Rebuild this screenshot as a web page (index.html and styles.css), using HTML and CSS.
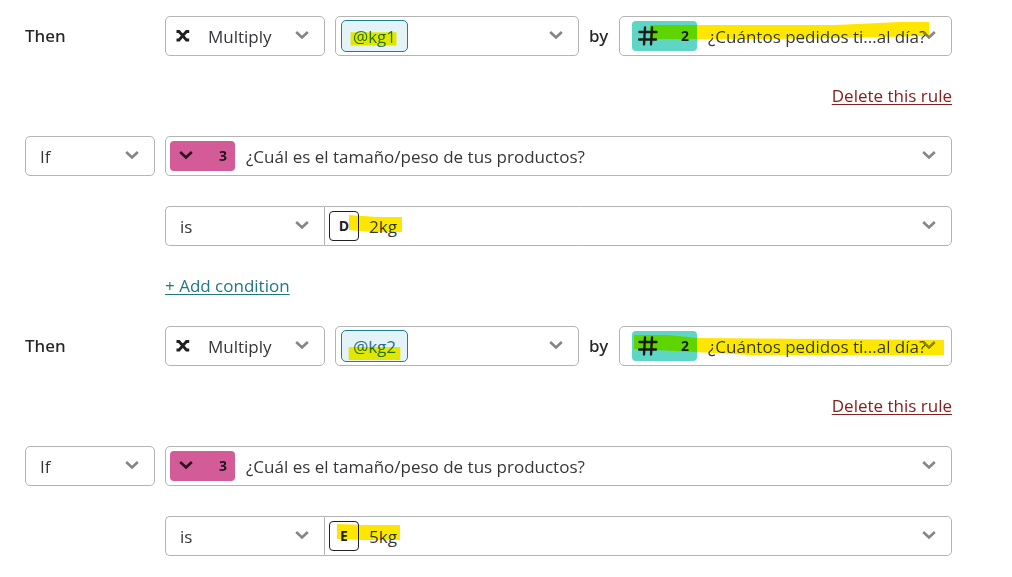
FILE: index.html
```html
<!DOCTYPE html>
<html lang="es">
<head>
<meta charset="utf-8">
<title>Logic rules</title>
<meta name="viewport" content="width=device-width, initial-scale=1">
<link rel="stylesheet" href="styles.css">
</head>
<body>
<svg class="defs" aria-hidden="true">
  <symbol id="chevron" viewBox="0 0 14 14"><path d="M1.2 3 7 8.4 12.8 3" fill="none" stroke="currentColor" stroke-width="2.6"/></symbol>
  <symbol id="times" viewBox="0 0 14 14"><path d="M.5 2.500H3L10.500 11h2.700M13.200 2.500H10.500L3 11H.5" fill="none" stroke="currentColor" stroke-width="2.800"/></symbol>
  <symbol id="hash" viewBox="0 0 20 20"><path d="M7 1.500 6 18.500M14 1.500 13 18.500M1.500 6h17M1 13.500h17" fill="none" stroke="currentColor" stroke-width="2.400" stroke-linecap="round"/></symbol>
</svg>
<main class="rules">
  <section class="row">
    <span class="word">Then</span>
    <div class="action">
      <div class="field operator">
        <svg class="times"><use href="#times"/></svg>
        <select aria-label="Operation"><option>Multiply</option></select>
        <svg class="chevron"><use href="#chevron"/></svg>
      </div>
      <button class="field variable" type="button" aria-haspopup="listbox">
        <span class="pill">@kg1
          <svg class="marker" viewBox="0 0 67 32"><path d="M8 12H57V26H8z"/></svg>
        </span>
        <svg class="chevron"><use href="#chevron"/></svg>
      </button>
      <span class="word">by</span>
      <div class="field operand">
        <span class="tag number"><svg class="hash"><use href="#hash"/></svg><b>2</b></span>
        <select aria-label="Value"><option>¿Cuántos pedidos ti...al día?</option></select>
        <svg class="chevron"><use href="#chevron"/></svg>
        <svg class="marker" viewBox="0 0 331 38" preserveAspectRatio="none"><path d="M30 8H215L280 5H309V19L220 21 150 22H30z"/></svg>
      </div>
    </div>
  </section>
  <a class="delete" href="#delete">Delete this rule</a>
  <section class="row">
    <div class="field">
      <select aria-label="Clause"><option>If</option></select>
      <svg class="chevron"><use href="#chevron"/></svg>
    </div>
    <div class="conditions">
      <div class="field question">
        <span class="tag choice"><svg class="chevron"><use href="#chevron"/></svg><b>3</b></span>
        <select aria-label="Question"><option>¿Cuál es el tamaño/peso de tus productos?</option></select>
        <svg class="chevron"><use href="#chevron"/></svg>
      </div>
      <div class="pair">
        <div class="field comparison">
          <select aria-label="Comparison"><option>is</option></select>
          <svg class="chevron"><use href="#chevron"/></svg>
        </div>
        <div class="field answer">
          <kbd class="key">D</kbd>
          <select aria-label="Answer"><option>2kg</option></select>
          <svg class="chevron"><use href="#chevron"/></svg>
          <svg class="marker" viewBox="0 0 626 38" preserveAspectRatio="xMinYMid"><path d="M24 8 52 10H77V25H46L24 23z"/></svg>
        </div>
      </div>
    </div>
  </section>
  <a class="add" href="#add">+ Add condition</a>
  <section class="row">
    <span class="word">Then</span>
    <div class="action">
      <div class="field operator">
        <svg class="times"><use href="#times"/></svg>
        <select aria-label="Operation"><option>Multiply</option></select>
        <svg class="chevron"><use href="#chevron"/></svg>
      </div>
      <button class="field variable" type="button" aria-haspopup="listbox">
        <span class="pill">@kg2
          <svg class="marker" viewBox="0 0 67 32"><path d="M6 17H61V31H6z"/></svg>
        </span>
        <svg class="chevron"><use href="#chevron"/></svg>
      </button>
      <span class="word">by</span>
      <div class="field operand">
        <span class="tag number"><svg class="hash"><use href="#hash"/></svg><b>2</b></span>
        <select aria-label="Value"><option>¿Cuántos pedidos ti...al día?</option></select>
        <svg class="chevron"><use href="#chevron"/></svg>
        <svg class="marker" viewBox="0 0 331 38" preserveAspectRatio="none"><path d="M14 8H48L78 11 324 13V28H130L75 25 14 22z"/></svg>
      </div>
    </div>
  </section>
  <a class="delete" href="#delete">Delete this rule</a>
  <section class="row">
    <div class="field">
      <select aria-label="Clause"><option>If</option></select>
      <svg class="chevron"><use href="#chevron"/></svg>
    </div>
    <div class="conditions">
      <div class="field question">
        <span class="tag choice"><svg class="chevron"><use href="#chevron"/></svg><b>3</b></span>
        <select aria-label="Question"><option>¿Cuál es el tamaño/peso de tus productos?</option></select>
        <svg class="chevron"><use href="#chevron"/></svg>
      </div>
      <div class="pair">
        <div class="field comparison">
          <select aria-label="Comparison"><option>is</option></select>
          <svg class="chevron"><use href="#chevron"/></svg>
        </div>
        <div class="field answer">
          <kbd class="key">E</kbd>
          <select aria-label="Answer"><option>5kg</option></select>
          <svg class="chevron"><use href="#chevron"/></svg>
          <svg class="marker" viewBox="0 0 626 38" preserveAspectRatio="xMinYMid"><path d="M12 7 40 8H75V23H36L12 22z"/></svg>
        </div>
      </div>
    </div>
  </section>
</main>
</body>
</html>
```
FILE: styles.css
```css
* { box-sizing: border-box; }

body {
  margin: 0;
  background: #fff;
  color: #35363a;
  font: 17px/24px "Open Sans", "Noto Sans", sans-serif;
}

.defs { position: absolute; width: 0; height: 0; }

.rules {
  display: flex;
  flex-direction: column;
  gap: 28px;
  padding: 16px 60px 20px 25px;
}

.row {
  display: grid;
  grid-template-columns: 130px minmax(0, 1fr);
  gap: 10px;
}

.row > .word { align-self: center; }
.word { font-family: "Noto Sans", sans-serif; font-weight: 500; color: #262627; }

.action {
  display: grid;
  grid-template-columns: 160px minmax(0, 244fr) 20px minmax(0, 333fr);
  gap: 10px;
  align-items: center;
}

.conditions { display: flex; flex-direction: column; gap: 30px; }
.pair { display: grid; grid-template-columns: 159px minmax(0, 1fr); }

.field {
  position: relative;
  display: flex;
  align-items: center;
  width: 100%;
  height: 40px;
  padding: 0 15px 0 14px;
  border: 1px solid #b4b4b4;
  border-radius: 5px;
  background: #fff;
  color: inherit;
  font: inherit;
}

.field select {
  flex: 1;
  min-width: 0;
  height: 38px;
  padding: 2px 0 0;
  border: 0;
  background: transparent;
  color: inherit;
  font: inherit;
  appearance: none;
}

.chevron { flex: none; width: 14px; height: 14px; color: #858585; pointer-events: none; }
.times { flex: none; width: 14px; height: 14px; margin-right: 18px; color: #202020; }
.hash { width: 20px; height: 20px; }

.operator { padding-left: 10px; }
.variable { justify-content: space-between; padding-left: 5px; }
.operand { padding-left: 12px; }
.operand select { margin-right: -14px; }
.question { padding-left: 4px; }
.comparison { border-right: 0; border-radius: 5px 0 0 5px; }
.answer { padding-left: 4px; border-radius: 0 5px 5px 0; }

.pill {
  position: relative;
  min-width: 67px;
  height: 32px;
  padding: 0 10px;
  border: 1px solid #1c8090;
  border-radius: 5px;
  background: #e3f3f7;
  color: #28708a;
  line-height: 32px;
}

.tag {
  display: flex;
  flex: none;
  align-items: center;
  justify-content: space-between;
  width: 65px;
  height: 30px;
  margin-right: 11px;
  padding: 0 8px 0 6px;
  border-radius: 4px;
  color: #17191a;
}
.tag b, .key { font-size: 14px; font-weight: 700; }
.number { background: #5ed5c5; }
.choice { padding-left: 9px; background: #d35c98; }
.choice .chevron { color: #2b0c1c; }

.key {
  flex: none;
  width: 30px;
  height: 30px;
  margin-right: 10px;
  border: 1px solid #202020;
  border-radius: 4px;
  color: #202020;
  font-family: inherit;
  line-height: 28px;
  text-align: center;
}

.marker {
  position: absolute;
  inset: 0;
  width: 100%;
  height: 100%;
  fill: #ffe600;
  mix-blend-mode: darken;
  pointer-events: none;
}

.delete { align-self: flex-end; color: #85201f; }
.add { align-self: flex-start; margin-left: 140px; color: #217783; }
.delete, .add { text-decoration-thickness: 1px; text-underline-offset: 2px; }
```
